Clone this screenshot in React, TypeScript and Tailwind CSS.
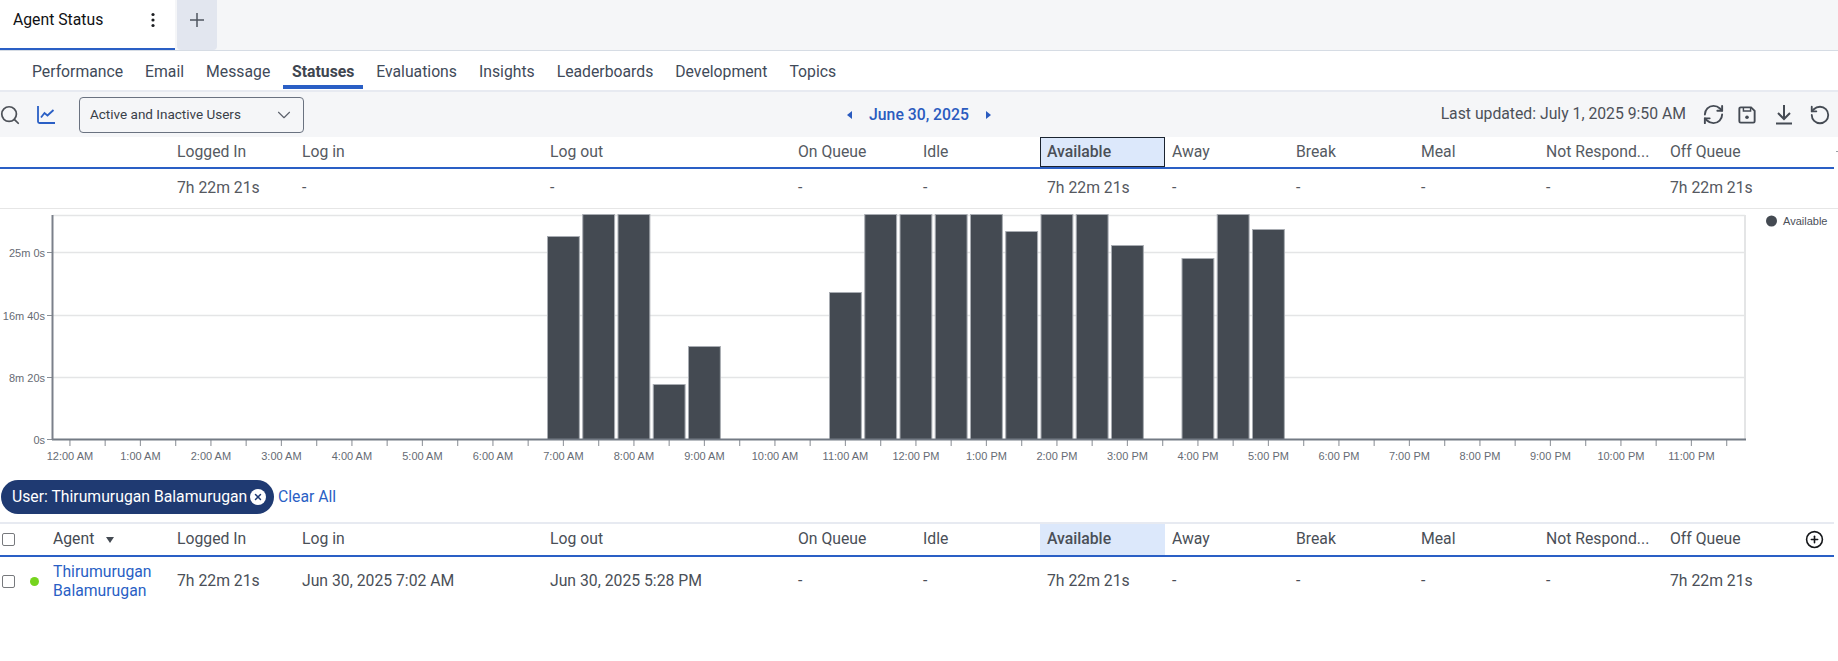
import React from "react";
import { Search, ChevronDown, RotateCcw, RefreshCw, CirclePlus, X } from "lucide-react";

const subTabs = ["Performance", "Email", "Message", "Statuses", "Evaluations", "Insights", "Leaderboards", "Development", "Topics"];

const cols = ["Logged In", "Log in", "Log out", "On Queue", "Idle", "Available", "Away", "Break", "Meal", "Not Respond...", "Off Queue"];
const summary = ["7h 22m 21s", "-", "-", "-", "-", "7h 22m 21s", "-", "-", "-", "-", "7h 22m 21s"];
const row = ["7h 22m 21s", "Jun 30, 2025 7:02 AM", "Jun 30, 2025 5:28 PM", "-", "-", "7h 22m 21s", "-", "-", "-", "-", "7h 22m 21s"];

const gridCols = "grid grid-cols-[170px_125px_248px_248px_125px_124px_125px_124px_125px_125px_124px_125px_1fr]";

const hours = ["12:00 AM", "1:00 AM", "2:00 AM", "3:00 AM", "4:00 AM", "5:00 AM", "6:00 AM", "7:00 AM", "8:00 AM", "9:00 AM", "10:00 AM", "11:00 AM", "12:00 PM", "1:00 PM", "2:00 PM", "3:00 PM", "4:00 PM", "5:00 PM", "6:00 PM", "7:00 PM", "8:00 PM", "9:00 PM", "10:00 PM", "11:00 PM"];

const bars: [number, number][] = [
  [14, 236], [15, 214], [16, 214], [17, 384], [18, 346],
  [22, 292], [23, 214], [24, 214], [25, 214], [26, 214], [27, 231], [28, 214], [29, 214], [30, 245],
  [32, 258], [33, 214], [34, 229],
];

function Chart() {
  const top = 209;
  const left = 53;
  const right = 1745;
  const xo = 52.3;
  const step = (right - left) / 48;
  const Y = (v: number) => v - top;
  return (
    <svg width="1838" height="271" className="block" fontFamily="'Liberation Sans', Arial, sans-serif">
      {[215, 252, 315, 377].map((y) => (
        <line key={y} x1={left} x2={right} y1={Y(y) + 0.5} y2={Y(y) + 0.5} stroke="#e4e5e6" strokeWidth="1.5" />
      ))}
      <line x1={right} x2={right} y1={Y(215)} y2={Y(440)} stroke="#e4e5e6" strokeWidth="2" />
      {[
        ["25m 0s", 252],
        ["16m 40s", 315],
        ["8m 20s", 377],
        ["0s", 439],
      ].map(([t, y]) => (
        <g key={t as string}>
          <text x="45" y={Y(y as number) + 4.5} textAnchor="end" fontSize="11" fill="#666b74">{t}</text>
          <line x1="47" x2={left} y1={Y(y as number) + 0.5} y2={Y(y as number) + 0.5} stroke="#8a8f96" />
        </g>
      ))}
      {bars.map(([i, y]) => (
        <rect key={i} x={xo + step * i + 1.7} y={Y(y) + 0.5} width={step - 3.4} height={439 - y} fill="#444a52" stroke="#a8acb2" strokeWidth="1" />
      ))}
      {Array.from({ length: 48 }).map((_, i) => (
        <line key={i} x1={xo + step * (i + 0.5)} x2={xo + step * (i + 0.5)} y1={Y(440)} y2={Y(446)} stroke="#9a9ea4" strokeWidth="1.2" />
      ))}
      <line x1={left - 1} x2={right + 1} y1={Y(439.5)} y2={Y(439.5)} stroke="#737a84" strokeWidth="2" />
      <line x1={left - 0.5} x2={left - 0.5} y1={Y(215)} y2={Y(440)} stroke="#7b808a" strokeWidth="2" />
      {hours.map((h, i) => (
        <text key={h} x={xo + step * (i * 2 + 0.5)} y={Y(460)} textAnchor="middle" fontSize="11" fill="#666b74">{h}</text>
      ))}
      <circle cx="1771.5" cy={Y(221)} r="5.5" fill="#444a52" />
      <text x="1783" y={Y(225)} fontSize="11" fill="#4b5059">Available</text>
    </svg>
  );
}

function Box() {
  return <span className="block h-[13px] w-[13px] rounded-[2px] border border-[#77797d] bg-white" />;
}

export default function App() {
  return (
    <div className="relative h-[661px] w-[1838px] overflow-hidden bg-white font-['Roboto',sans-serif] text-[15.75px] text-[#4d5158]">
      {/* Browser-like tabs */}
      <div className="flex h-[51px] border-b border-[#d6dce4] bg-[#f5f6f8]">
        <div className="flex h-[50px] w-[175px] items-center justify-between border-b-2 border-[#2a5fc5] bg-white pb-[9px] pl-[13px] pr-[19px] text-[#101114]">
          <span>Agent Status</span>
          <svg width="6" height="16" viewBox="0 0 6 16" fill="#1c1e22">
            <circle cx="3" cy="2.5" r="1.6" />
            <circle cx="3" cy="8" r="1.6" />
            <circle cx="3" cy="13.5" r="1.6" />
          </svg>
        </div>
        <div className="ml-[2px] flex h-[50px] w-[40px] items-center justify-center rounded-b-[4px] bg-[#e2e6ef] pb-[10px]">
          <svg width="14" height="14" viewBox="0 0 14 14" stroke="#4f5560" strokeWidth="1.5">
            <path d="M7 0v14M0 7h14" />
          </svg>
        </div>
      </div>

      {/* Sub navigation */}
      <div className="flex h-[41px] border-b-2 border-[#e7eaf1] pl-[21px] text-[#3f4a59]">
        {subTabs.map((t) =>
          t === "Statuses" ? (
            <div key={t} className="ml-[2px] mr-[2px] flex h-[38px] w-[80px] items-center justify-center border-b-4 border-[#2a5fc5] pt-[8px] font-bold text-[#3f4650]">{t}</div>
          ) : (
            <div key={t} className="flex h-[39px] items-center px-[11px] pt-[3px]">{t}</div>
          ),
        )}
      </div>

      {/* Toolbar */}
      <div className="grid h-[45px] grid-cols-[1fr_auto_1fr] items-center bg-[#f5f6f8]">
        <div className="flex items-center">
          <Search className="ml-[-1px] h-[22px] w-[22px] text-[#4d5158]" strokeWidth={1.9} />
          <svg className="ml-[16px]" width="19" height="19" viewBox="0 0 19 19" fill="none" stroke="#2a5fc5" strokeWidth="1.8">
            <path d="M1 1v15.5a1.5 1.5 0 0 0 1.5 1.5H18" />
            <path d="M4 12.5l3.5-4.5 3 2.5L16.5 5" />
          </svg>
          <div className="ml-[23px] flex h-[36px] w-[225px] items-center justify-between rounded-[4px] border border-[#6a7280] bg-[#f5f6f8] pl-[10px] pr-[8px] text-[13.5px] text-[#3a4048]">
            <span>Active and Inactive Users</span>
            <ChevronDown className="h-[22px] w-[22px] text-[#5b616b]" strokeWidth={1.2} />
          </div>
        </div>
        <div className="flex items-center font-medium text-[#2a5bbf]">
          <span className="mr-[17px] h-0 w-0 border-y-[4px] border-r-[5px] border-y-transparent border-r-[#2a5bbf]" />
          <span>June 30, 2025</span>
          <span className="ml-[17px] h-0 w-0 border-y-[4px] border-l-[5px] border-y-transparent border-l-[#2a5bbf]" />
        </div>
        <div className="flex items-center justify-end pr-[7px]">
          <span className="mr-[16px] pb-[2px] text-[#4d5158]">Last updated: July 1, 2025 9:50 AM</span>
          <RefreshCw className="mr-[13px] h-[23px] w-[23px] text-[#454b54]" strokeWidth={2} />
          <svg className="mr-[18px]" width="18" height="20" viewBox="0 0 20 20" fill="none" stroke="#454b54" strokeWidth="2.1">
            <path d="M3 1.5h11.5l4 4V17a1.5 1.5 0 0 1-1.5 1.5H3A1.5 1.5 0 0 1 1.5 17V3A1.5 1.5 0 0 1 3 1.5z" />
            <path d="M6 1.5v4h8v-4" strokeWidth="1.6" />
            <circle cx="10" cy="12.5" r="2" fill="#454b54" stroke="none" />
          </svg>
          <svg className="mr-[15px]" width="20" height="21" viewBox="0 0 20 21" fill="none" stroke="#454b54" strokeWidth="2">
            <path d="M10 1v13M4 9l6 6 6-6M2 19.5h16" />
          </svg>
          <RotateCcw className="h-[22px] w-[22px] text-[#454b54]" strokeWidth={2} />
        </div>
      </div>

      {/* Summary table */}
      <div className={`${gridCols} h-[32px] w-[1834px] items-center border-b-2 border-[#2a5fc5] text-[#555a62]`}>
        <div />
        {cols.map((c) =>
          c === "Available" ? (
            <div key={c} className="flex h-[30px] items-center border-[1.5px] border-[#1b2430] bg-[#dce8fb] pl-[6px] font-medium text-[#4a4f57]">{c}</div>
          ) : (
            <div key={c} className="pl-[7px]">{c}</div>
          ),
        )}
      </div>
      <div className="absolute right-0 top-[151px] h-[1px] w-[2px] bg-[#9a9ea4]" />
      <div className={`${gridCols} h-[40px] items-center border-b border-[#e6e6e6] pb-[2px] text-[#55595f]`}>
        <div />
        {summary.map((v, i) => (
          <div key={i} className="pl-[7px]">{v}</div>
        ))}
      </div>

      <Chart />

      {/* Filters */}
      <div className="flex h-[34px] items-center pl-[1px]">
        <div className="flex h-[34px] w-[273px] items-center rounded-full bg-[#1f3a72] pl-[11px] text-white">
          <span className="whitespace-nowrap">User: Thirumurugan Balamurugan</span>
          <span className="ml-[3px] flex h-[16px] w-[16px] shrink-0 items-center justify-center rounded-full bg-white">
            <X className="h-[10px] w-[10px] text-[#1f3a72]" strokeWidth={3.5} />
          </span>
        </div>
        <span className="ml-[4px] text-[#2a5fc5]">Clear All</span>
      </div>

      {/* Data table */}
      <div className={`${gridCols} relative mt-[8px] h-[35px] w-[1834px] items-center border-y-2 border-b-[#2a5fc5] border-t-[#e7eaf1] pb-[1px]`}>
        <div className="flex items-center">
          <span className="ml-[2px]"><Box /></span>
          <span className="ml-[38px] text-[#454a52]">Agent</span>
          <span className="ml-[12px] mt-[2px] h-0 w-0 border-x-[4px] border-t-[6px] border-x-transparent border-t-[#444a52]" />
        </div>
        {cols.map((c) =>
          c === "Available" ? (
            <div key={c} className="mb-[-1px] flex h-[31px] items-center bg-[#dce8fb] pb-[1px] pl-[7px] font-medium text-[#4a4f57]">{c}</div>
          ) : (
            <div key={c} className="pl-[7px] text-[#4a4f57]">{c}</div>
          ),
        )}
        <div className="flex justify-end pr-[10px]">
          <CirclePlus className="h-[19px] w-[19px] text-[#15171a]" strokeWidth={2} />
        </div>
      </div>
      <div className={`${gridCols} h-[48px] items-center text-[#4a4f57]`}>
        <div className="flex items-center">
          <span className="ml-[2px]"><Box /></span>
          <span className="ml-[15px] h-[9px] w-[9px] rounded-full bg-[#76d41e]" />
          <span className="ml-[14px] w-[100px] leading-[19px] text-[#2a5fc5]">Thirumurugan Balamurugan</span>
        </div>
        {row.map((v, i) => (
          <div key={i} className="pl-[7px]">{v}</div>
        ))}
      </div>
    </div>
  );
}
